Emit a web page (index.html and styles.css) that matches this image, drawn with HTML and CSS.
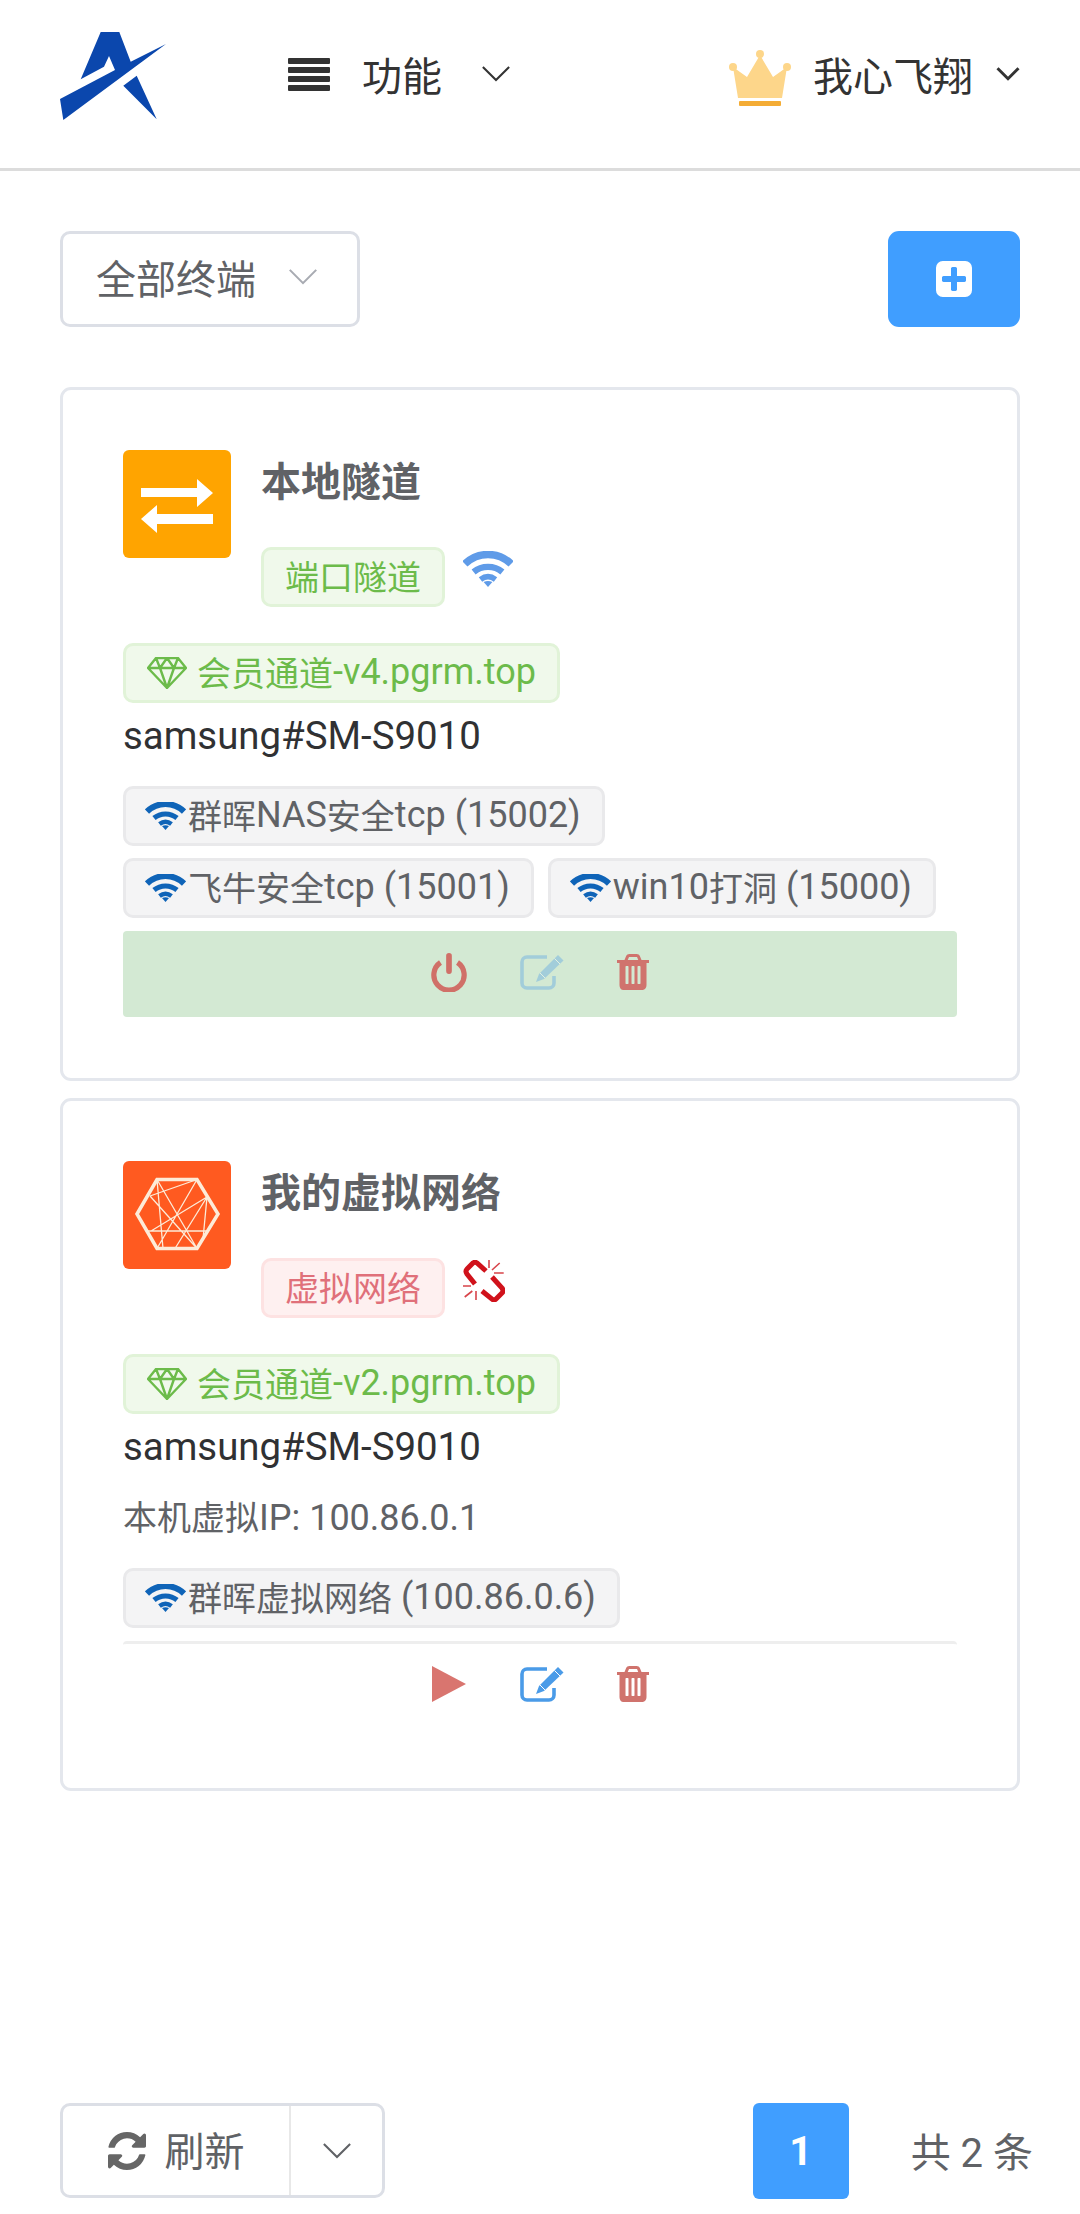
FILE: index.html
```html
<!DOCTYPE html>
<html lang="zh-CN">
<head>
<meta charset="utf-8">
<title>终端</title>
<link rel="stylesheet" href="styles.css">
</head>
<body>
<svg class="defs" width="0" height="0">
  <symbol id="wifi" viewBox="0 0 40 28"><g fill="none" stroke="currentColor"><path d="M1.500 9.500C12-.5 28-.5 38.500 9.500" stroke-width="6"/><path d="M8.500 16C15 10.500 25 10.500 31.500 16" stroke-width="5"/><path d="M14 22C18 19 22 19 26 22" stroke-width="4.500"/></g><path d="M16.500 24L20 28l3.500-4c-2.500-1-4.500-1-7 0z" fill="currentColor"/></symbol>
  <symbol id="gem" viewBox="0 0 40 32"><path d="M9 1h22l8 10-19 20L1 11zM1 11h38M13 11l7 20 7-20M9 1l4 10 7-10 7 10 4-10" fill="none" stroke="currentColor" stroke-width="2.400" stroke-linejoin="round"/></symbol>
  <symbol id="trash" viewBox="256 128 1280 1536"><path d="M704 1376v-704q0-14-9-23t-23-9h-64q-14 0-23 9t-9 23v704q0 14 9 23t23 9h64q14 0 23-9t9-23zm256 0v-704q0-14-9-23t-23-9h-64q-14 0-23 9t-9 23v704q0 14 9 23t23 9h64q14 0 23-9t9-23zm256 0v-704q0-14-9-23t-23-9h-64q-14 0-23 9t-9 23v704q0 14 9 23t23 9h64q14 0 23-9t9-23zm-544-992h448l-48-117q-7-9-17-11h-317q-10 2-17 11zm928 32v64q0 14-9 23t-23 9h-96v948q0 83-47 143.500t-113 60.500h-832q-66 0-113-58.500t-47-141.500v-952h-96q-14 0-23-9t-9-23v-64q0-14 9-23t23-9h309l70-167q15-37 54-63t79-26h320q40 0 79 26t54 63l70 167h309q14 0 23 9t9 23z"/></symbol>
  <symbol id="edit" viewBox="0 0 44 36"><path d="M27 3H7a5 5 0 0 0-5 5v21a5 5 0 0 0 5 5h22a5 5 0 0 0 5-5v-7" fill="none" stroke="currentColor" stroke-width="3.600"/><path d="M38 1l5.500 5.500L24 25l-8 3 3-8z" fill="currentColor"/><path d="M34.500 4.500l5.500 5.500M20 19l5 5" fill="none" stroke="#fff" stroke-width="1"/></symbol>
  <symbol id="chev" viewBox="0 0 32 18"><path d="M2 2l14 14L30 2" fill="none" stroke="currentColor"/></symbol>
</svg>

<div class="page">
  <header class="topbar">
    <svg class="logo" viewBox="0 0 107 88"><path d="M40.700 0H59.300L70.700 29.700 106 12 3.300 88 0 67 55 38 49 24 44 34.700 20.700 47.300zM76.700 43.700L96.700 87.300 63.300 53.700z" fill="#0b47ad"/></svg>
    <div class="menu">
      <svg class="bars" viewBox="0 0 42 33"><rect y="0" width="42" height="6" rx="1"/><rect y="9" width="42" height="6" rx="1"/><rect y="18" width="42" height="6" rx="1"/><rect y="27" width="42" height="6" rx="1"/></svg>
      <span>功能</span>
      <svg class="chev"><use href="#chev"/></svg>
    </div>
    <div class="user">
      <svg class="crown" viewBox="0 0 62 57">
        <g fill="#fdd68a"><circle cx="31" cy="5" r="4"/><circle cx="4" cy="18" r="4"/><circle cx="58" cy="18" r="4"/><path d="M31 6l13 22 14-10-5 31H9L4 18l14 10z"/></g>
        <rect x="10" y="52" width="42" height="5" rx="1" fill="#f4ac35"/>
      </svg>
      <span>我心飞翔</span>
      <svg class="chev dark"><use href="#chev"/></svg>
    </div>
  </header>

  <main class="content">
    <div class="toolbar">
      <div class="select">全部终端<svg class="chev light"><use href="#chev"/></svg></div>
      <button class="add" type="button"><svg viewBox="128 128 1536 1536"><path d="M1408 960v-128q0-26-19-45t-45-19h-320v-320q0-26-19-45t-45-19h-128q-26 0-45 19t-19 45v320h-320q-26 0-45 19t-19 45v128q0 26 19 45t45 19h320v320q0 26 19 45t45 19h128q26 0 45-19t19-45v-320h320q26 0 45-19t19-45zm256-544v960q0 119-84.500 203.500t-203.500 84.500h-960q-119 0-203.500-84.500t-84.500-203.500v-960q0-119 84.500-203.500t203.500-84.500h960q119 0 203.500 84.500t84.500 203.500z"/></svg></button>
    </div>

    <section class="card">
      <div class="card-head">
        <div class="thumb orange">
          <svg viewBox="0 0 108 108"><path d="M18 38h56v-9l16 14-16 14v-10H18zM90 64H34v-9L18 69l16 14V74h56z" fill="#fff"/></svg>
        </div>
        <div class="card-title">
          <h2>本地隧道</h2>
          <div class="type-row">
            <span class="tag green">端口隧道</span>
            <svg class="status-wifi"><use href="#wifi"/></svg>
          </div>
        </div>
      </div>
      <div class="tag green node"><svg class="gem"><use href="#gem"/></svg>会员通道<span class="en">-v4.pgrm.top</span></div>
      <p class="device">samsung#SM-S9010</p>
      <div class="services">
        <span class="tag grey"><svg class="wifi"><use href="#wifi"/></svg>群晖<span class="en">NAS</span>安全<span class="en">tcp (15002)</span></span>
        <span class="tag grey"><svg class="wifi"><use href="#wifi"/></svg>飞牛安全<span class="en">tcp (15001)</span></span>
        <span class="tag grey"><svg class="wifi"><use href="#wifi"/></svg><span class="en">win10</span>打洞<span class="en">&nbsp;(15000)</span></span>
      </div>
      <div class="actions running">
        <svg class="act power" viewBox="0 0 38 40"><path d="M10 10a16 16 0 1 0 18 0" fill="none" stroke="#d07068" stroke-width="5.500"/><rect x="16" y="0" width="6" height="22" rx="3" fill="#d07068"/></svg>
        <svg class="act pen faded"><use href="#edit"/></svg>
        <svg class="act bin"><use href="#trash"/></svg>
      </div>
    </section>

    <section class="card">
      <div class="card-head">
        <div class="thumb red">
          <svg viewBox="0 0 108 108" fill="none" stroke="#fdebd8"><path d="M14 53L34 18.500H74L95 53 74 87.500H34z" stroke-width="3.500"/><path d="M34 18.500L74 87.500M74 18.500L34 87.500M34 18.500L40 87.500M27 35L74 18.500M27 35L74 87.500M84 36L52 87.500M28 70L84 36M24 70H85M84 36L80 78" stroke-width="1.300"/></svg>
        </div>
        <div class="card-title">
          <h2>我的虚拟网络</h2>
          <div class="type-row">
            <span class="tag pink">虚拟网络</span>
            <svg class="broken" viewBox="0 0 42 42"><path d="M23 11L14 3Q12 1.500 10 3L4 9Q2 11 4 14L12 24M19 31L29 39Q31 41 33 39L39 33Q41 31 39 28L29 17" fill="none" stroke="#d0121b" stroke-width="5"/><path d="M26 0v8M36.700 3L29 10M40.700 13H31M0 26h8M1.700 37L9.300 31M13 40v-9" fill="none" stroke="#d8444a" stroke-width="1.600"/></svg>
          </div>
        </div>
      </div>
      <div class="tag green node"><svg class="gem"><use href="#gem"/></svg>会员通道<span class="en">-v2.pgrm.top</span></div>
      <p class="device">samsung#SM-S9010</p>
      <p class="vip">本机虚拟<span class="en">IP: 100.86.0.1</span></p>
      <div class="services">
        <span class="tag grey"><svg class="wifi"><use href="#wifi"/></svg>群晖虚拟网络<span class="en">&nbsp;(100.86.0.6)</span></span>
      </div>
      <div class="actions">
        <svg class="act play" viewBox="0 0 34 36"><path d="M0 0l34 18L0 36z" fill="#d9756f"/></svg>
        <svg class="act pen"><use href="#edit"/></svg>
        <svg class="act bin"><use href="#trash"/></svg>
      </div>
    </section>
  </main>

  <footer class="pager">
    <div class="refresh">
      <div class="refresh-main"><svg viewBox="128 128 1536 1536"><path d="M1639 1056q0 5-1 7-64 268-268 434.500t-478 166.500q-146 0-282.500-55t-243.500-157l-129 129q-19 19-45 19t-45-19-19-45v-448q0-26 19-45t45-19h448q26 0 45 19t19 45-19 45l-137 137q71 66 161 102t187 36q134 0 250-65t186-179q11-17 53-117 8-23 30-23h192q13 0 22.500 9.500t9.500 22.500zm25-800v448q0 26-19 45t-45 19h-448q-26 0-45-19t-19-45 19-45l138-138q-148-137-349-137-134 0-250 65t-186 179q-11 17-53 117-8 23-30 23h-199q-13 0-22.500-9.500t-9.500-22.500v-7q65-268 270-434.500t480-166.500q146 0 284 55.500t245 156.500l130-129q19-19 45-19t45 19 19 45z"/></svg><span class="label">刷新</span></div>
      <div class="refresh-more"><svg class="chev"><use href="#chev"/></svg></div>
    </div>
    <div class="pages">
      <span class="page-num">1</span>
      <span class="total">共 2 条</span>
    </div>
  </footer>
</div>
</body>
</html>
```

FILE: styles.css
```css
* {
  box-sizing: border-box;
}
body {
  margin: 0;
  background: #fff;
  color: #606266;
  font-family: Roboto, "Noto Sans CJK SC", sans-serif;
  font-size: 40px;
}
.defs {
  position: absolute;
}
.page {
  min-height: 100vh;
  display: flex;
  flex-direction: column;
}
.en {
  font-size: 36px;
}

.topbar {
  height: 171px;
  padding: 0 60px 21px;
  display: flex;
  align-items: center;
  border-bottom: 3px solid #dcdcdc;
  color: #333;
}
.logo {
  width: 107px;
  height: 88px;
  margin: 4px 121px 0 0;
}
.menu {
  display: flex;
  align-items: center;
}
.bars {
  width: 42px;
  height: 33px;
  fill: #333;
  margin: 2px 32px 0 0;
}
.menu .chev {
  margin-left: 39px;
}
.user {
  margin-left: auto;
  display: flex;
  align-items: center;
}
.crown {
  width: 62px;
  height: 57px;
  margin: 8px 22px 0 0;
}
.user .chev {
  margin-left: 23px;
  width: 24px;
}
.chev {
  width: 30px;
  height: 17px;
  color: #333;
  stroke-width: 2.2;
}
.chev.dark {
  stroke-width: 4;
}
.chev.light {
  color: #a8abb2;
  width: 32px;
  margin-left: 31px;
}

.content {
  padding: 60px 60px 0;
}
.toolbar {
  display: flex;
  justify-content: space-between;
}
.select {
  width: 300px;
  height: 96px;
  padding: 0 33px 5px;
  display: flex;
  align-items: center;
  border: 3px solid #dcdfe6;
  border-radius: 10px;
}
.add {
  width: 132px;
  height: 96px;
  padding: 0;
  border: 0;
  border-radius: 11px;
  background: #409eff;
}
.add svg {
  width: 36px;
  height: 36px;
  fill: #fff;
  display: block;
  margin: auto;
}

.card {
  margin-top: 60px;
  padding: 60px 60px 61px;
  border: 3px solid #e4e7ed;
  border-radius: 11px;
}
.card + .card {
  margin-top: 17px;
}
.card-head {
  display: flex;
}
.thumb {
  width: 108px;
  height: 108px;
  border-radius: 6px;
  flex: none;
}
.thumb svg {
  display: block;
  width: 108px;
  height: 108px;
}
.orange {
  background: #ffa400;
}
.red {
  background: #ff5a20;
}
.card-title {
  margin-left: 30px;
}
h2 {
  margin: 0;
  padding-top: 1px;
  font-size: 40px;
  line-height: 63px;
  font-weight: 700;
}
.type-row {
  margin-top: 33px;
  display: flex;
  align-items: center;
}
.tag {
  display: inline-flex;
  align-items: center;
  height: 60px;
  padding: 0 21px 3px;
  border: 3px solid;
  border-radius: 10px;
  font-size: 34px;
  white-space: pre;
}
.green {
  background: #f0f9eb;
  border-color: #e1f3d8;
  color: #6cbb4a;
}
.pink {
  background: #fef0f0;
  border-color: #fde2e2;
  color: #e0707a;
}
.grey {
  background: #f4f4f5;
  border-color: #e9e9eb;
  color: #606266;
  padding: 0 21px 3px 19px;
}
.status-wifi {
  width: 50px;
  height: 37px;
  margin: -16px 0 0 18px;
  color: #5f9be8;
}
.broken {
  width: 42px;
  height: 42px;
  margin: -14px 0 0 18px;
}
.node {
  margin-top: 36px;
}
.gem {
  width: 40px;
  height: 32px;
  margin: 2px 10px 0 0;
}
.device {
  margin: 3px 0 0;
  line-height: 60px;
  font-size: 38.4px;
  color: #303133;
}
.vip {
  margin: 11px 0 0;
  line-height: 60px;
  font-size: 34px;
}
.services {
  margin-top: 20px;
  display: flex;
  flex-wrap: wrap;
  gap: 12px 14px;
}
.wifi {
  width: 41px;
  height: 28px;
  margin: 2px 2px 0 0;
  color: #0f64b8;
}
.actions {
  margin-top: 13px;
  height: 86px;
  padding: 0 0 4px 0;
  display: flex;
  align-items: center;
  justify-content: center;
  gap: 53px;
  border-radius: 4px;
  border-top: 3px solid #eee;
}
.actions.running {
  background: #d3e9d3;
  border-top: 0;
}
.act {
  width: 36px;
  height: 36px;
}
.power {
  height: 40px;
}
.pen {
  width: 44px;
  color: #4a9be8;
}
.faded {
  opacity: 0.35;
}
.bin {
  width: 32px;
  fill: #d0736d;
}

.pager {
  margin-top: auto;
  padding: 0 47px 15px 60px;
  display: flex;
  justify-content: space-between;
}
.refresh {
  width: 325px;
  height: 95px;
  display: flex;
  border: 3px solid #dcdfe6;
  border-radius: 10px;
}
.refresh-main {
  width: 228px;
  display: flex;
  align-items: center;
  justify-content: center;
  gap: 19px;
  border-right: 2px solid #e8e8e8;
}
.refresh-main svg {
  width: 38px;
  height: 38px;
  fill: #666;
}
.label {
  margin-top: -4px;
}
.refresh-more {
  flex: 1;
  display: flex;
  align-items: center;
  justify-content: center;
}
.refresh-more .chev {
  color: #606266;
}
.pages {
  display: flex;
  align-items: center;
}
.page-num {
  width: 96px;
  height: 96px;
  display: flex;
  align-items: center;
  justify-content: center;
  background: #409eff;
  border-radius: 6px;
  color: #fff;
  font-weight: 700;
}
.total {
  margin: -3px 0 0 62px;
}
```
